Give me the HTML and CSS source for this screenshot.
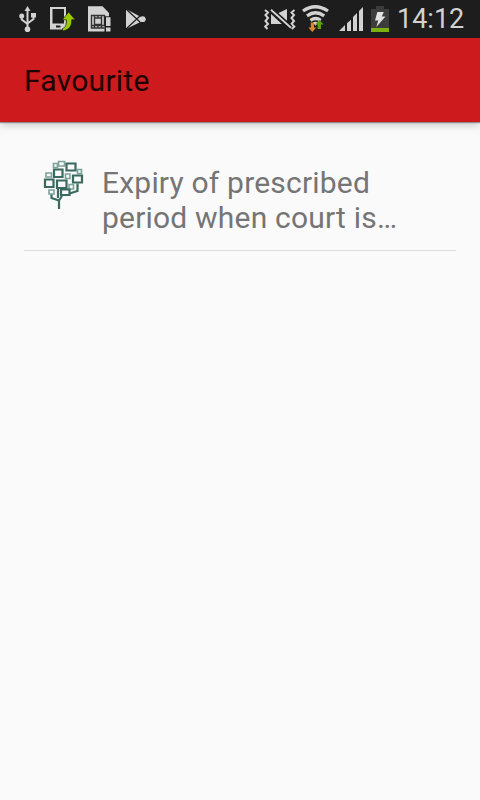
FILE: index.html
```html
<!DOCTYPE html>
<html lang="en">
<head>
    <meta charset="UTF-8">
    <meta name="viewport" content="width=device-width, initial-scale=1.0">
    <title>Favourite</title>
    <link rel="stylesheet" href="styles.css">
</head>
<body>
    <div class="status-bar">
        <div class="notifications">
            <!-- usb -->
            <svg width="18" height="28" viewBox="0 0 18 28" fill="#d2d2d2">
                <path d="M8.500 1l3 5h-6z"/>
                <circle cx="2.700" cy="11" r="2.500"/>
                <path d="M12 8h5v4.500h-5z"/>
                <circle cx="8.500" cy="24.200" r="2.800"/>
                <path d="M8.500 5v19M2.700 11v3.500l5.800 4.500M14.500 11v3l-6 4.500" fill="none" stroke="#d2d2d2" stroke-width="2"/>
            </svg>
            <!-- phone with arrow -->
            <svg width="26" height="28" viewBox="0 0 26 28">
                <path fill="#d2d2d2" fill-rule="evenodd" d="M0 2h16v22.500H0zM2.500 4v14.500H14V4zM6 20.500v2h4.500v-2z"/>
                <path fill="#99cc00" stroke="#1d1d1d" stroke-width=".7" d="M18.700 7l6.500 7.800h-3.500c.2 6-2.200 10.200-9.200 11.200v-2.500c3.300-1 4-4.200 3.800-8.700h-4.100z"/>
            </svg>
            <!-- sim card -->
            <svg width="23" height="28" viewBox="0 0 23 28">
                <path fill="#d2d2d2" d="M-1 1.200h14.500L20 8v8h-4v10.500H-1z"/>
                <path fill="none" stroke="#333" stroke-width="1.400" d="M2.500 10.500h13v10h-13zM2.500 12v8.500h13M5.500 13h7v6.500h-7zM2.500 20.500v2.500h13M5.500 10.500V23M9 10.500V13M12.500 10.500V23M9 19.500V23"/>
                <path fill="#1d1d1d" d="M15.500 11.300H23V27h-7.500z"/>
                <path fill="#d2d2d2" d="M17 12.300h4.500v8.700H17zM17 22.500h4.500v4H17z"/>
            </svg>
            <!-- play store -->
            <svg width="21" height="28" viewBox="0 0 21 28">
                <path fill="#d2d2d2" d="M-1 4l15 8 5 2.200-5 2.500L-1 24z"/>
                <path fill="none" stroke="#1d1d1d" stroke-width="1.200" d="M-1 4l14.500 13.500M-1 24L13.500 10.500"/>
                <circle cx="15.700" cy="14.200" r="2.900" fill="#d2d2d2"/>
            </svg>
        </div>
        <div class="system">
            <!-- vibrate / muted -->
            <svg class="mute" width="32" height="28" viewBox="0 0 32 28">
                <path fill="#d2d2d2" d="M7 8.800L18 19H7zM13.500 8.500L23 4v13z"/>
                <path fill="none" stroke="#d2d2d2" stroke-width="2" d="M7 4.800l20 18"/>
                <path fill="none" stroke="#d2d2d2" stroke-width="2" d="M1 5l3 2.500L1.500 10l2.500 3-2.500 3L4 19l-2.800 2.500L3.500 24M30.500 5l-3 2.500L30 10l-2.500 3 2.500 3-2.500 3 2.800 2.500-2.500 2.500"/>
                <path fill="none" stroke="#1d1d1d" stroke-width="1.300" d="M9.500 4.500l18 16.200M6 7l18 16.200"/>
            </svg>
            <!-- wifi -->
            <svg class="wifi" width="28" height="28" viewBox="0 0 28 28">
                <g fill="none" stroke="#d2d2d2" stroke-width="3.300">
                    <path d="M1 6q12.200-8.500 25 0"/>
                    <path d="M5 10.800q8.500-6 17.200 0"/>
                    <path d="M8.500 15.300q5.200-3.500 10.200 0"/>
                </g>
                <path fill="#d2d2d2" d="M10.800 17.500q2.700-1.700 5.500 0l-2.700 3.300z"/>
                <path fill="#d9882f" d="M8.800 17.500H12v5h2.300l-4 4.500-4-4.500h2.500z"/>
                <path fill="#5ca010" d="M15.600 24v-4.500h-2.500l4.200-4.800 4.300 4.800H19V24z"/>
            </svg>
            <!-- signal -->
            <svg class="signal" width="25" height="28" viewBox="0 0 25 28" fill="#d2d2d2">
                <path d="M0 26l6-6v6zM8 18.200l4-3.500V26H8zM14 12l4-4v18h-4zM20 6l4-4v24h-4z"/>
            </svg>
            <!-- battery -->
            <svg class="battery" width="18" height="28" viewBox="0 0 18 28">
                <path fill="#3c3c3c" d="M5 1h8v3h5v19H0V4h5z"/>
                <path fill="#7cb010" d="M0 23h18v4H0z"/>
                <path fill="#e2e2e2" d="M6.300 7h6.500l-2 4.500h3.700L5.300 22l2-6.500H4z"/>
            </svg>
            <span class="clock">14:12</span>
        </div>
    </div>

    <header>
        <h1>Favourite</h1>
    </header>

    <main>
        <div class="item">
            <svg class="tree" width="42" height="50" viewBox="0 0 42 50" fill="none" stroke="#39695f">
                <g stroke-width="1.600" stroke="#7da299">
                    <path d="M11.500 3.500h4v4h-4zM16.500 1.500h6V6h-6zM35.500 9.500h4v4h-4zM4 13h5.500v4H4zM23.500 14h4.500v4.500h-4.500zM7 30h5v4H7zM27 24.500h4.500v4.500H27z"/>
                </g>
                <path stroke-width="2.200" d="M17 49v-8.500L9.500 38v-3.500M17 40.500l3-4.500M27.500 33.500l8-2.500v-7.500"/>
                <path stroke-width="2.200" d="M24.500 3.500h9v7h-9zM12 9.500h8.500v7.500H12zM31 15.500h9v7h-9zM3 19.500h8.500V27H3zM15 20.500h9.500V28H15zM19 29.500h8.500v5.500H19zM16 29v9"/>
            </svg>
            <p>Expiry of prescribed<br>period when court is…</p>
        </div>
    </main>
</body>
</html>
```
FILE: styles.css
```css
body {
    font-family: Roboto, sans-serif;
    margin: 0;
    padding: 0;
    background-color: #fafafa;
}

.status-bar {
    background-color: #1d1d1d;
    height: 38px;
    display: flex;
    justify-content: space-between;
    box-sizing: border-box;
    padding: 5px 16px 0 19px;
}

.notifications {
    display: flex;
    gap: 13px;
}

.notifications svg {
    overflow: visible;
}

.notifications svg:nth-child(4) {
    margin-left: 2px;
}

.system {
    display: flex;
}

.mute {
    margin-right: 6px;
}

.wifi {
    margin-right: 9px;
}

.signal {
    margin-right: 7px;
}

.battery {
    margin-right: 8px;
}

.clock {
    color: #d2d2d2;
    width: 67px;
    font-size: 27px;
    line-height: 28px;
    white-space: nowrap;
}

header {
    background-color: #cc1a1d;
    height: 84px;
    display: flex;
    align-items: center;
    box-sizing: border-box;
    padding-left: 24px;
    box-shadow: 0 1px 1px rgba(0, 0, 0, 0.35), 0 3px 8px rgba(0, 0, 0, 0.2);
}

h1 {
    margin: 0;
    color: #1e0303;
    font-size: 30px;
    font-weight: 400;
    line-height: 35px;
    letter-spacing: 0.25px;
}

main {
    padding: 32px 24px;
}

.item {
    display: flex;
    height: 96px;
    border-bottom: 1px solid #dedede;
}

.tree {
    margin: 6px 18px 0 18px;
}

.item p {
    margin: 11px 0 0;
    color: #757575;
    font-size: 30px;
    line-height: 35px;
    letter-spacing: 0.2px;
    white-space: nowrap;
}
```
